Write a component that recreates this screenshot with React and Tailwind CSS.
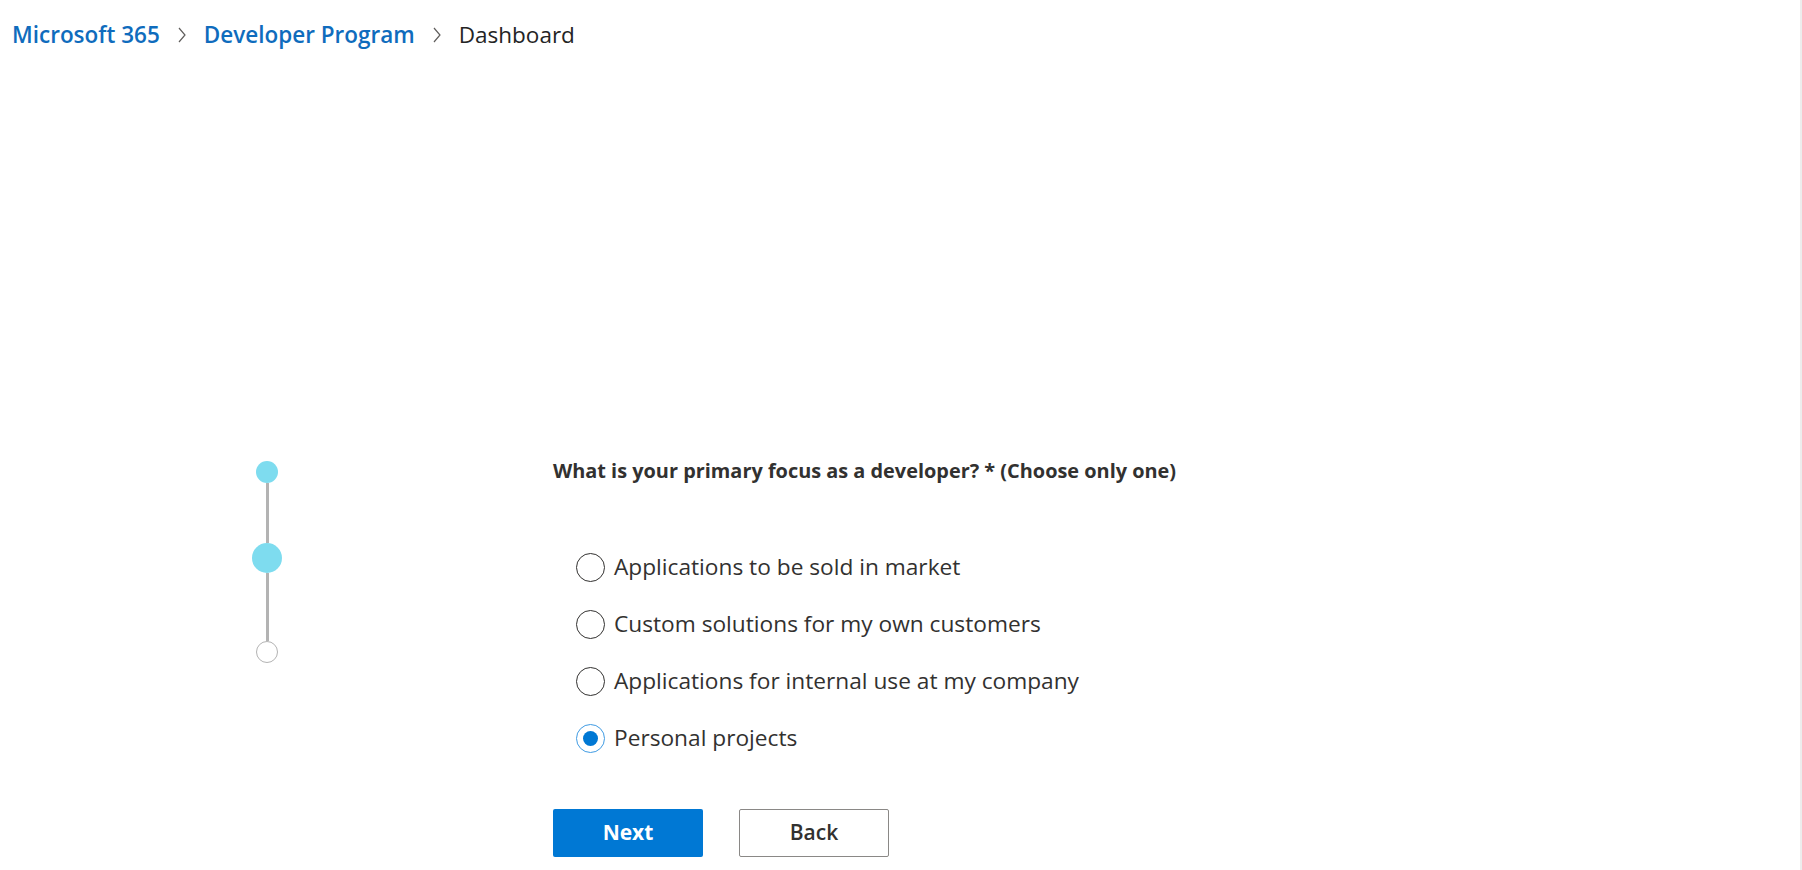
import React, { useState } from 'react';

const OPTIONS = [
  'Applications to be sold in market',
  'Custom solutions for my own customers',
  'Applications for internal use at my company',
  'Personal projects',
];

function Chevron() {
  return (
    <svg width="10" height="18" viewBox="0 0 10 18" className="mx-[17px] shrink-0">
      <polyline points="2,2 8,9 2,16" fill="none" stroke="#605e5c" strokeWidth="1.2" />
    </svg>
  );
}

function Stepper() {
  return (
    <div className="flex w-[30px] flex-col items-center">
      <div className="h-[22px] w-[22px] rounded-full bg-[#7edcef]" />
      <div className="h-[60px] w-[3px] bg-[#b3b3b3]" />
      <div className="h-[30px] w-[30px] rounded-full bg-[#7edcef]" />
      <div className="h-[68px] w-[3px] bg-[#b3b3b3]" />
      <div className="h-[22px] w-[22px] rounded-full border border-[#b3b3b3] bg-white" />
    </div>
  );
}

function Radio({ label, checked, onSelect }) {
  return (
    <label className="flex h-[57px] cursor-pointer items-center" onClick={onSelect}>
      <span
        className={
          checked
            ? 'flex h-[29px] w-[29px] shrink-0 items-center justify-center rounded-full border-[1.5px] border-[#3f9be3] bg-white'
            : 'flex h-[29px] w-[29px] shrink-0 items-center justify-center rounded-full border-[1.5px] border-[#323130] bg-white'
        }
      >
        {checked && <span className="h-[15px] w-[15px] rounded-full bg-[#0078d4]" />}
      </span>
      <span className="ml-[9px] text-[22.7px] text-[#323130]">{label}</span>
    </label>
  );
}

export default function App() {
  const [selected, setSelected] = useState(3);

  return (
    <div className="min-h-[870px] w-full border-r-2 border-[#ededed] bg-white font-['Open_Sans','Noto_Sans',sans-serif]">
      {/* Breadcrumb */}
      <nav className="flex items-center pl-[12px] pt-[19px] text-[22.5px] leading-[32px]">
        <span className="font-semibold text-[#0f6cbd]">Microsoft 365</span>
        <Chevron />
        <span className="font-semibold text-[#0f6cbd]">Developer Program</span>
        <Chevron />
        <span className="text-[#242424]">Dashboard</span>
      </nav>

      <div className="mt-[410px] flex">
        <div className="ml-[252px] w-[301px]">
          <Stepper />
        </div>

        <div className="flex flex-col">
          <h2 className="mt-[-2px] text-[19.9px] font-bold leading-[24px] text-[#323130]">
            What is your primary focus as a developer? * (Choose only one)
          </h2>

          <div className="mt-[56px] flex flex-col pl-[23px]">
            {OPTIONS.map((opt, i) => (
              <Radio key={opt} label={opt} checked={selected === i} onSelect={() => setSelected(i)} />
            ))}
          </div>

          <div className="mt-[42px] flex gap-[36px]">
            <button className="h-[48px] w-[150px] rounded-[2px] bg-[#0078d4] text-[21px] font-bold text-white">
              Next
            </button>
            <button className="h-[48px] w-[150px] rounded-[2px] border border-[#8a8886] bg-white text-[21px] font-semibold text-[#323130]">
              Back
            </button>
          </div>
        </div>
      </div>
    </div>
  );
}
